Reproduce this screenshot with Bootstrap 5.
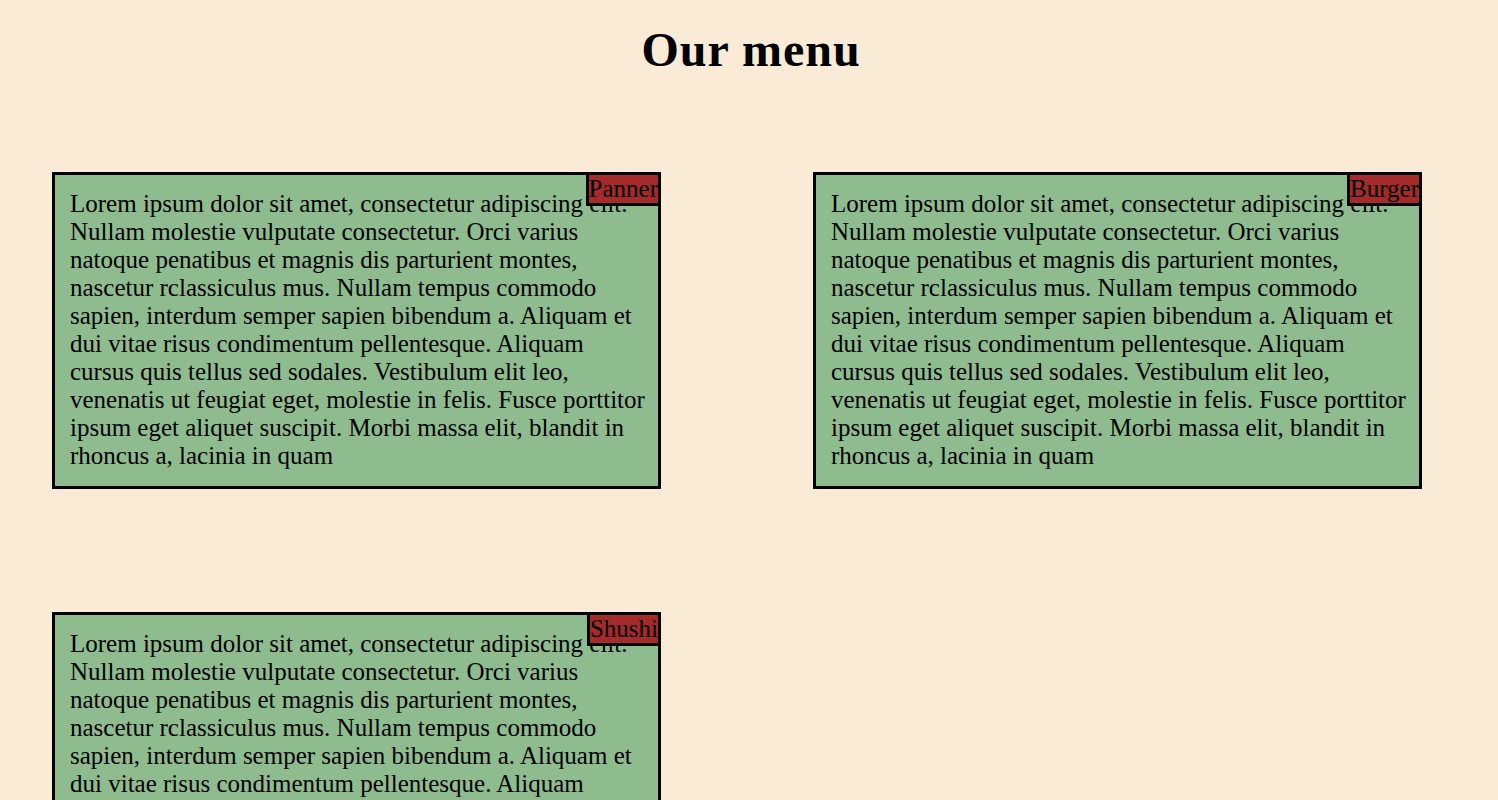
<!DOCTYPE html>
<html lang="en">
<head>
<meta charset="utf-8">
<meta name="viewport" content="width=device-width, initial-scale=1">
<title>Our menu</title>
<link href="https://cdn.jsdelivr.net/npm/bootstrap@5.3.0/dist/css/bootstrap.min.css" rel="stylesheet">
<style>
body { background: antiquewhite; color: #000; font-family: "Liberation Serif", serif; font-size: 25px; line-height: 28px; }
/* the page scrolls without showing a bar */
html { scrollbar-width: none; }
html::-webkit-scrollbar { display: none; }
.menu-title { font-size: 48px; line-height: 60px; letter-spacing: 1px; padding: 20px 0 0 4px; margin-bottom: 92px; }
.dish-grid { grid-template-columns: repeat(2, minmax(0, 1fr)); gap: 123px 152px; padding: 0 76px 123px 52px; }
.dish { background: darkseagreen; border: 3px solid #000; padding: 15px 12px 16px 15px; }
.dish-name { background: brown; border: 3px solid #000; top: -3px; right: -3px; font-size: 25px; line-height: 28px; font-weight: 400; }
@media (max-width: 767px) {
  .dish-grid { grid-template-columns: minmax(0, 1fr); gap: 48px; padding: 0 24px 48px; }
}
</style>
</head>
<body>
<main class="container-fluid p-0">
  <h1 class="menu-title text-center fw-bold">Our menu</h1>
  <div class="dish-grid d-grid">
    <section class="dish position-relative">
      <p class="mb-0">Lorem ipsum dolor sit amet, consectetur adipiscing elit. Nullam molestie vulputate consectetur. Orci varius natoque penatibus et magnis dis parturient montes, nascetur rclassiculus mus. Nullam tempus commodo sapien, interdum semper sapien bibendum a. Aliquam et dui vitae risus condimentum pellentesque. Aliquam cursus quis tellus sed sodales. Vestibulum elit leo, venenatis ut feugiat eget, molestie in felis. Fusce porttitor ipsum eget aliquet suscipit. Morbi massa elit, blandit in rhoncus a, lacinia in quam</p>
      <h2 class="dish-name position-absolute m-0">Panner</h2>
    </section>
    <section class="dish position-relative">
      <p class="mb-0">Lorem ipsum dolor sit amet, consectetur adipiscing elit. Nullam molestie vulputate consectetur. Orci varius natoque penatibus et magnis dis parturient montes, nascetur rclassiculus mus. Nullam tempus commodo sapien, interdum semper sapien bibendum a. Aliquam et dui vitae risus condimentum pellentesque. Aliquam cursus quis tellus sed sodales. Vestibulum elit leo, venenatis ut feugiat eget, molestie in felis. Fusce porttitor ipsum eget aliquet suscipit. Morbi massa elit, blandit in rhoncus a, lacinia in quam</p>
      <h2 class="dish-name position-absolute m-0">Burger</h2>
    </section>
    <section class="dish position-relative">
      <p class="mb-0">Lorem ipsum dolor sit amet, consectetur adipiscing elit. Nullam molestie vulputate consectetur. Orci varius natoque penatibus et magnis dis parturient montes, nascetur rclassiculus mus. Nullam tempus commodo sapien, interdum semper sapien bibendum a. Aliquam et dui vitae risus condimentum pellentesque. Aliquam cursus quis tellus sed sodales. Vestibulum elit leo, venenatis ut feugiat eget, molestie in felis. Fusce porttitor ipsum eget aliquet suscipit. Morbi massa elit, blandit in rhoncus a, lacinia in quam</p>
      <h2 class="dish-name position-absolute m-0">Shushi</h2>
    </section>
  </div>
</main>
<script src="https://cdn.jsdelivr.net/npm/bootstrap@5.3.0/dist/js/bootstrap.bundle.min.js"></script>
</body>
</html>
